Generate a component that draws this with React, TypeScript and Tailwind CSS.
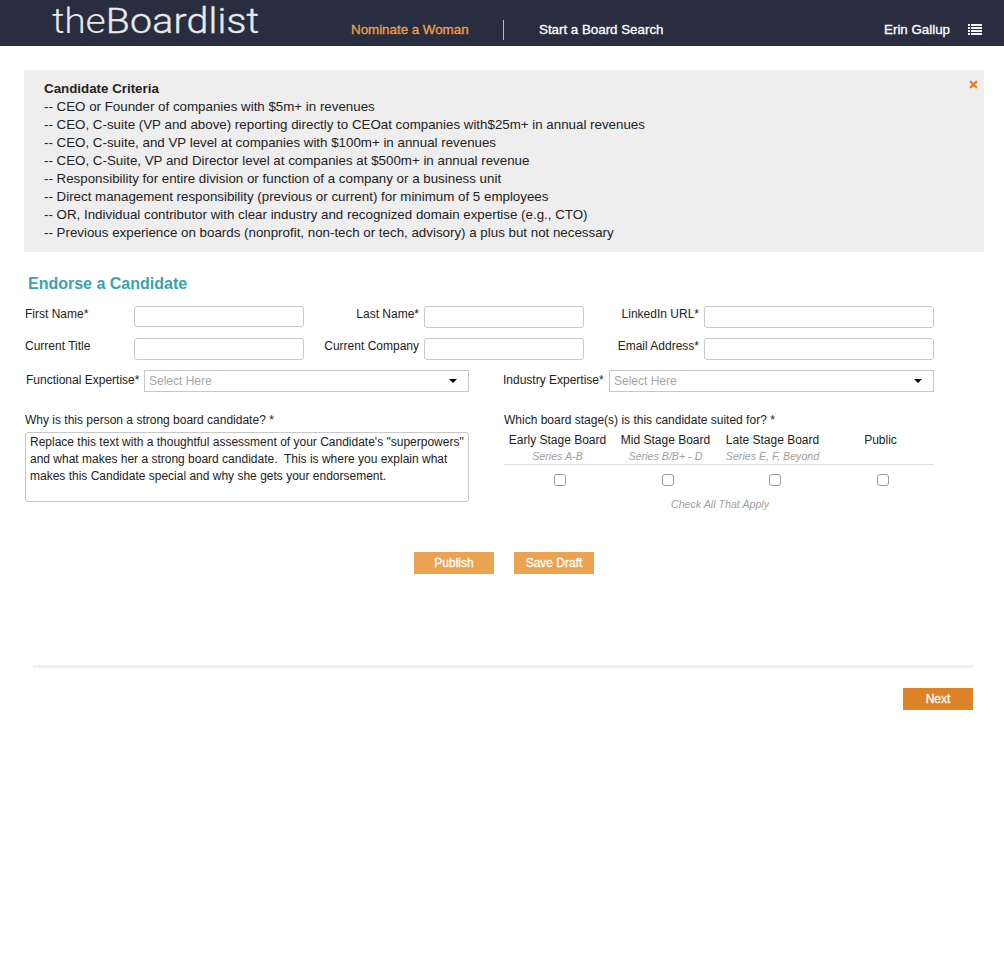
import { X } from "lucide-react";

const criteria = [
  "-- CEO or Founder of companies with $5m+ in revenues",
  "-- CEO, C-suite (VP and above) reporting directly to CEOat companies with$25m+ in annual revenues",
  "-- CEO, C-suite, and VP level at companies with $100m+ in annual revenues",
  "-- CEO, C-Suite, VP and Director level at companies at $500m+ in annual revenue",
  "-- Responsibility for entire division or function of a company or a business unit",
  "-- Direct management responsibility (previous or current) for minimum of 5 employees",
  "-- OR, Individual contributor with clear industry and recognized domain expertise (e.g., CTO)",
  "-- Previous experience on boards (nonprofit, non-tech or tech, advisory) a plus but not necessary",
];

const stages = [
  { name: "Early Stage Board", sub: "Series A-B", col: "w-[107px]", box: "w-[107px] pl-[5px]" },
  { name: "Mid Stage Board", sub: "Series B/B+ - D", col: "w-[109px]", box: "w-[109px] pl-[5px]" },
  { name: "Late Stage Board", sub: "Series E, F, Beyond", col: "w-[105px]", box: "w-[105px] pl-[5px]" },
  { name: "Public", sub: "", col: "w-[109px] pl-[2px]", box: "w-[109px] pl-[7px]" },
];

function TextInput({ className }: { className: string }) {
  return <input type="text" className={`rounded-[3px] border border-[#c8c8c8] bg-white ${className}`} />;
}

function SelectBox({ className }: { className: string }) {
  return (
    <div className={`flex h-[22px] items-center justify-between border border-[#c8c8c8] bg-white pl-1 pr-[11px] ${className}`}>
      <span className="text-[12px] text-[#a5a5a5]">Select Here</span>
      <span className="h-0 w-0 border-x-[4px] border-t-[4px] border-x-transparent border-t-black" />
    </div>
  );
}

function ListIcon() {
  return (
    <svg width="14" height="11" viewBox="0 0 14 11" fill="#f2f2f2">
      <rect x="0" y="0" width="2" height="2" />
      <rect x="3" y="0" width="11" height="2" />
      <rect x="0" y="3" width="2" height="2" />
      <rect x="3" y="3" width="11" height="2" />
      <rect x="0" y="6" width="2" height="2" />
      <rect x="3" y="6" width="11" height="2" />
      <rect x="0" y="9" width="2" height="2" />
      <rect x="3" y="9" width="11" height="2" />
    </svg>
  );
}

function Logo() {
  return (
    <svg width="215" height="46" viewBox="0 0 215 46" fontFamily="Roboto, sans-serif" fontSize="35" fill="#e9e9e9">
      <g transform="scale(1.12 1)">
        <text x="0" y="33" fontWeight="300" textLength="48" lengthAdjust="spacing">the</text>
        <text x="48" y="33" fontWeight="300" textLength="137" lengthAdjust="spacing" stroke="#e9e9e9" strokeWidth="0.4">Boardlist</text>
      </g>
    </svg>
  );
}

export default function App() {
  return (
    <div className="min-h-[954px] bg-white font-['Liberation_Sans',Arial,sans-serif] text-[12px] text-[#222]">
      {/* Header */}
      <header className="flex h-[46px] items-start bg-[#282e40] text-[13.33px] [-webkit-text-stroke:0.3px]">
        <div className="ml-[52px] w-[299px]">
          <Logo />
        </div>
        <a className="mt-[22px] w-[152px] leading-4 text-[#f0a04b]">Nominate a Woman</a>
        <span className="mt-5 h-[20px] w-px bg-[#bbb]" />
        <a className="mt-[22px] ml-[35px] leading-4 text-white">Start a Board Search</a>
        <a className="mt-[22px] ml-auto leading-4 text-white">Erin Gallup</a>
        <span className="mt-[24px] mr-[22px] ml-[18px]">
          <ListIcon />
        </span>
      </header>

      {/* Criteria banner */}
      <section className="relative mx-[24px] mt-[24px] h-[182px] w-[960px] bg-[#eeeeee] px-5 pt-[10px] text-[13.33px] leading-[18px]">
        <div className="font-bold">Candidate Criteria</div>
        {criteria.map((line) => (
          <div key={line}>{line}</div>
        ))}
        <X className="absolute top-[9px] right-[5px] h-[11px] w-[11px] text-[#dc8227]" strokeWidth={5} />
      </section>

      {/* Form */}
      <section className="pl-[25px]">
        <h2 className="mt-[22px] ml-[3px] text-[16px] leading-5 font-bold text-[#37a3b3]">Endorse a Candidate</h2>

        <div className="mt-[12px] flex leading-4">
          <label className="w-[109px]">First Name*</label>
          <TextInput className="h-[21px] w-[170px]" />
          <label className="w-[115px] text-right">Last Name*</label>
          <TextInput className="ml-[5px] h-[22px] w-[160px]" />
          <label className="w-[115px] text-right">LinkedIn URL*</label>
          <TextInput className="ml-[5px] h-[22px] w-[230px]" />
        </div>

        <div className="mt-[10px] flex leading-4">
          <label className="w-[109px]">Current Title</label>
          <TextInput className="h-[22px] w-[170px]" />
          <label className="w-[115px] text-right">Current Company</label>
          <TextInput className="ml-[5px] h-[22px] w-[160px]" />
          <label className="w-[115px] text-right">Email Address*</label>
          <TextInput className="ml-[5px] h-[22px] w-[230px]" />
        </div>

        <div className="mt-[10px] flex">
          <label className="ml-px w-[118px] pt-px">Functional Expertise*</label>
          <SelectBox className="w-[325px]" />
          <label className="ml-[34px] w-[105px] pt-px">Industry Expertise*</label>
          <SelectBox className="ml-px w-[325px]" />
        </div>

        <div className="mt-[20px] flex">
          <div className="w-[444px]">
            <div className="leading-[16px]">Why is this person a strong board candidate? *</div>
            <div className="mt-[4px] h-[70px] rounded-[3px] border border-[#c8c8c8] bg-white px-1 py-[1px] leading-[17px]">
              Replace this text with a thoughtful assessment of your Candidate's "superpowers" and what makes her a
              strong board candidate.&nbsp; This is where you explain what makes this Candidate special and why she
              gets your endorsement.
            </div>
          </div>

          <div className="ml-[35px] w-[430px]">
            <div className="leading-[16px]">Which board stage(s) is this candidate suited for? *</div>
            <div className="mt-[4px] flex border-b border-[#dddddd]">
              {stages.map((s) => (
                <div key={s.name} className={`${s.col} text-center`}>
                  <div className="leading-[16px]">{s.name}</div>
                  <div className="h-[16px] text-[10.67px] leading-[16px] italic text-[#a0a0a0]">{s.sub}</div>
                </div>
              ))}
            </div>
            <div className="mt-[9px] flex">
              {stages.map((s) => (
                <div key={s.name} className={s.box}>
                  <span className="mx-auto block h-3 w-3 rounded-[3px] border border-[#9a9a9a] bg-white" />
                </div>
              ))}
            </div>
            <div className="mt-[11px] ml-[2px] text-center text-[10.67px] leading-[14px] italic text-[#a0a0a0]">
              Check All That Apply
            </div>
          </div>
        </div>

        <div className="mt-[41px] flex pl-[389px]">
          <button className="h-[22px] w-[80px] bg-[#eba352] text-[12px] text-white [-webkit-text-stroke:0.3px]">Publish</button>
          <button className="ml-5 h-[22px] w-[80px] bg-[#eba352] text-[12px] text-white [-webkit-text-stroke:0.3px]">Save Draft</button>
        </div>
      </section>

      <div className="mx-[33px] mt-[91px] h-[3px] w-[940px] bg-[#eeeeee]" />

      <div className="mt-[20px] flex justify-end pr-[31px]">
        <button className="h-[22px] w-[70px] bg-[#dc8227] text-[12px] text-white [-webkit-text-stroke:0.3px]">Next</button>
      </div>
    </div>
  );
}
